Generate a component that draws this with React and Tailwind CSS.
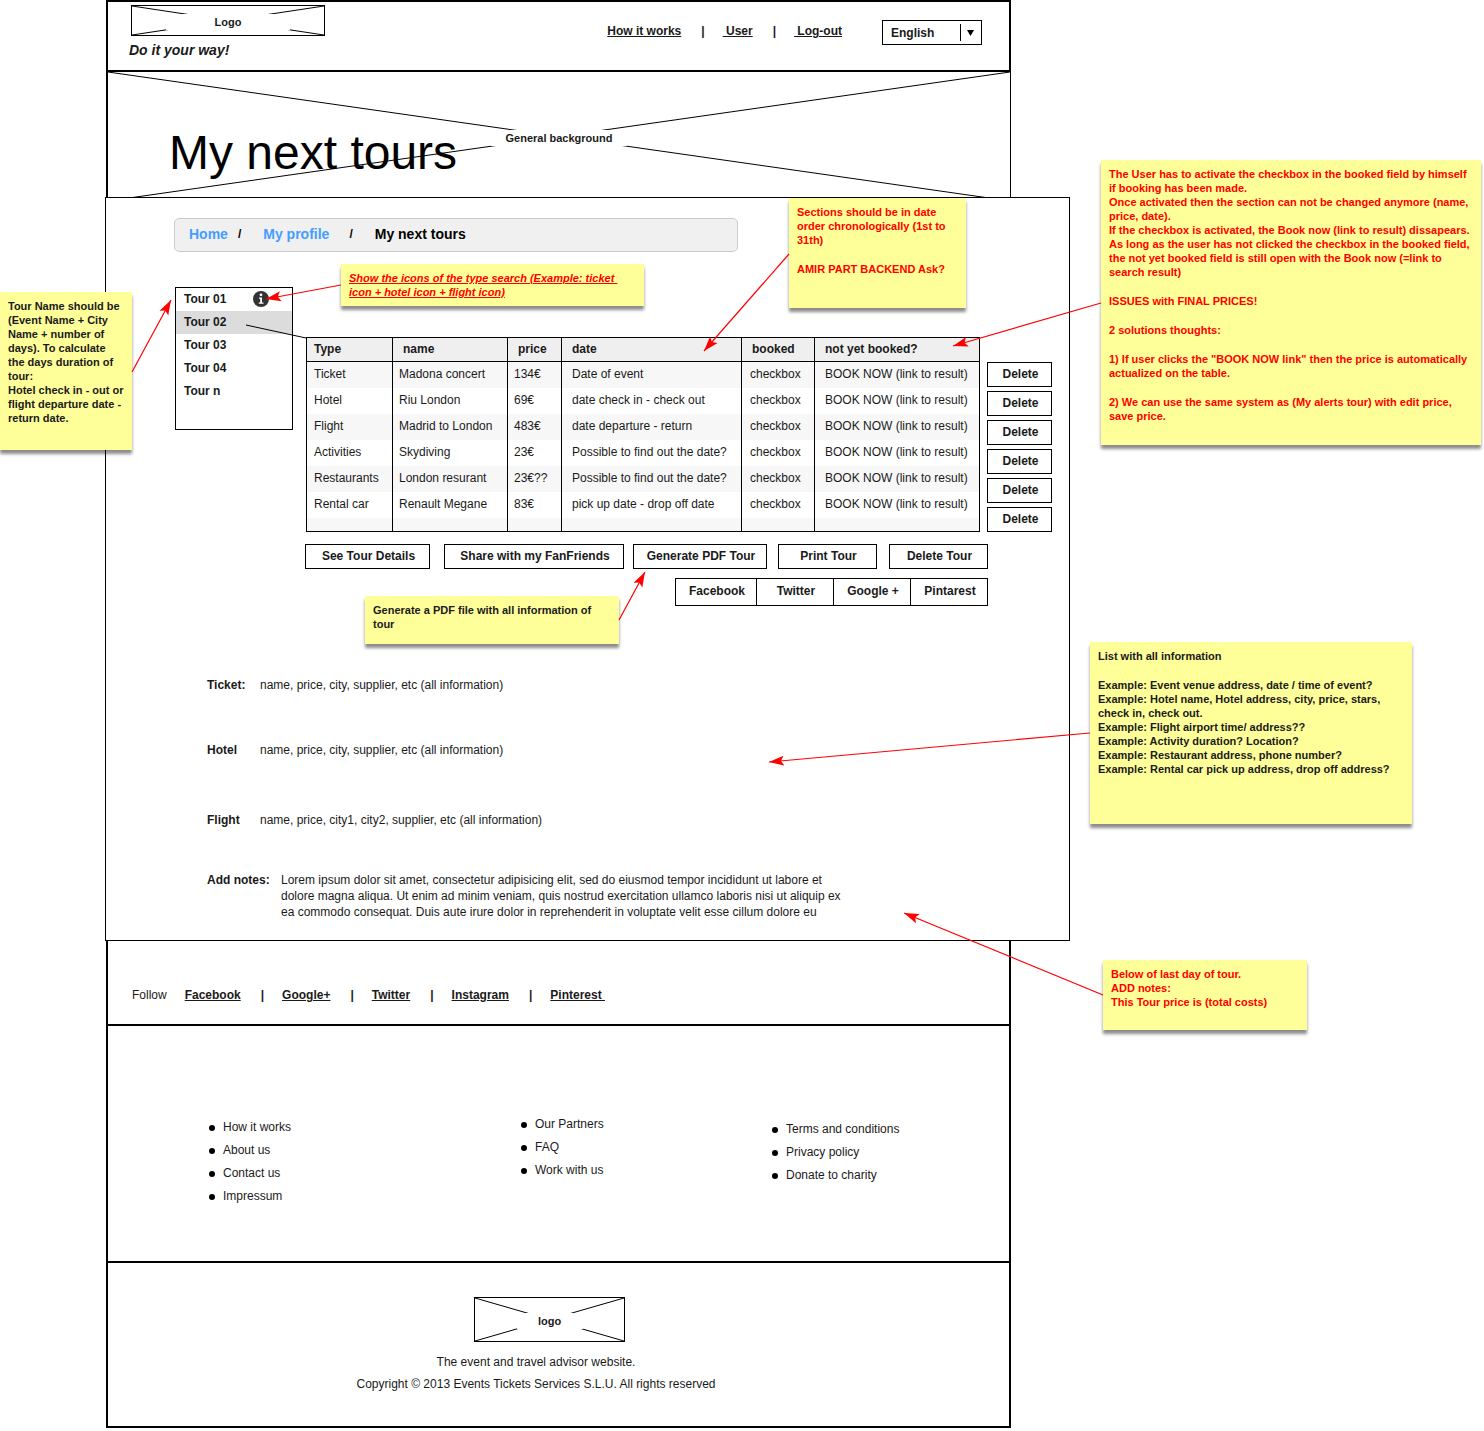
import React from "react";

const TOURS = ["Tour 01", "Tour 02", "Tour 03", "Tour 04", "Tour n"];

const COLUMNS = [
  { label: "Type", head: "w-[85px] pl-[7px]", cell: "pl-[7px]" },
  { label: "name", head: "w-[115px] border-l pl-[10px]", cell: "border-l pl-[6px]" },
  { label: "price", head: "w-[54px] border-l pl-[10px]", cell: "border-l pl-[6px]" },
  { label: "date", head: "w-[180px] border-l pl-[10px]", cell: "border-l pl-[10px]" },
  { label: "booked", head: "w-[73px] border-l pl-[10px]", cell: "border-l pl-[8px]" },
  { label: "not yet booked?", head: "w-[165px] border-l pl-[10px]", cell: "border-l pl-[10px]" },
];

const BOOK = "BOOK NOW (link to result)";

const ROWS = [
  ["Ticket", "Madona concert", "134€", "Date of event", "checkbox", BOOK],
  ["Hotel", "Riu London", "69€", "date check in - check out", "checkbox", BOOK],
  ["Flight", "Madrid to London", "483€", "date departure - return", "checkbox", BOOK],
  ["Activities", "Skydiving", "23€", "Possible to find out the date?", "checkbox", BOOK],
  ["Restaurants", "London resurant", "23€??", "Possible to find out the date?", "checkbox", BOOK],
  ["Rental car", "Renault Megane", "83€", "pick up date - drop off date", "checkbox", BOOK],
];

const ACTIONS = [
  { label: "See Tour Details", style: "w-[125px] mr-[14px]" },
  { label: "Share with my FanFriends", style: "w-[180px] mr-[9px]" },
  { label: "Generate PDF Tour", style: "w-[134px] mr-[11px]" },
  { label: "Print Tour", style: "w-[99px] mr-[12px]" },
  { label: "Delete Tour", style: "w-[99px]" },
];

const SHARE = [
  { label: "Facebook", style: "w-[80px]" },
  { label: "Twitter", style: "w-[77px] border-l" },
  { label: "Google +", style: "w-[77px] border-l" },
  { label: "Pintarest", style: "w-[77px] border-l" },
];

const FOLLOW = ["Facebook", "Google+", "Twitter", "Instagram", "Pinterest\u00a0"];

const FOOTER_LISTS = [
  { style: "w-[312px] pt-[3px]", items: ["How it works", "About us", "Contact us", "Impressum"] },
  { style: "w-[251px]", items: ["Our Partners", "FAQ", "Work with us"] },
  { style: "pt-[5px]", items: ["Terms and conditions", "Privacy policy", "Donate to charity"] },
];

const ARROWS = [
  [132, 372, 171, 300],
  [341, 285, 266, 299],
  [789, 254, 704, 351],
  [1101, 303, 953, 346],
  [619, 620, 645, 572],
  [1090, 733, 769, 762],
  [1103, 995, 904, 913],
];

function Placeholder({ label, className, labelClass }) {
  return (
    <div className={"relative flex items-center justify-center pt-[3px] " + className}>
      <svg className="absolute inset-0 h-full w-full" stroke="#000" strokeWidth="1" aria-hidden="true">
        <line x1="0" y1="0" x2="100%" y2="100%" />
        <line x1="0" y1="100%" x2="100%" y2="0" />
      </svg>
      <span className={"relative bg-white text-center text-[11px] leading-4 font-bold " + labelClass}>{label}</span>
    </div>
  );
}

function Note({ className, blocks }) {
  return (
    <aside
      className={
        "absolute flex flex-col gap-[15px] bg-[#ffff99] px-2 pt-[7px] text-[11px] leading-[14px] font-bold whitespace-nowrap shadow-[0_4px_3px_rgba(0,0,0,0.45)] " +
        className
      }
    >
      {blocks.map((lines, i) => (
        <p key={i}>
          {lines.map((line, j) => (
            <span key={j} className="block">
              {line}
            </span>
          ))}
        </p>
      ))}
    </aside>
  );
}

function Header() {
  return (
    <header className="mr-[473px] ml-[106px] flex items-start border-2 border-black pt-[3px] pr-[27px] pb-[10px] pl-[21px]">
      <div>
        <Placeholder label="Logo" className="ml-[2px] h-[31px] w-[194px] border border-black" labelClass="w-[124px]" />
        <p className="mt-[4px] text-sm leading-5 font-bold italic">Do it your way!</p>
      </div>
      <nav className="mt-[18px] ml-auto flex items-center leading-4 font-bold" aria-label="Account">
        <a href="#how" className="underline">How it works</a>
        <span className="mr-[18px] ml-[20px]">|</span>
        <a href="#user" className="underline">&nbsp;User</a>
        <span className="mr-[18px] ml-[20px]">|</span>
        <a href="#logout" className="underline">&nbsp;Log-out</a>
      </nav>
      <div className="relative mt-[15px] ml-10">
        <select
          aria-label="Language"
          defaultValue="English"
          className="block h-[25px] w-[100px] appearance-none border border-black bg-white pl-2 font-bold"
        >
          <option>English</option>
        </select>
        <svg className="pointer-events-none absolute top-0 right-0 h-[25px] w-[24px]" viewBox="0 0 24 25" aria-hidden="true">
          <path d="M2.5 4v17" stroke="#000" />
          <path d="M9 10h7l-3.500 6z" fill="#000" />
        </svg>
      </div>
    </header>
  );
}

function Hero() {
  return (
    <div className="relative mr-[473px] ml-[106px]">
      <Placeholder
        label="General background"
        className="h-[129px] border-r border-l-2 border-black"
        labelClass="w-[136px]"
      />
      <h1 className="absolute top-[53px] left-[63px] text-5xl leading-[56px] text-black">My next tours</h1>
    </div>
  );
}

function InfoIcon() {
  return (
    <svg className="h-4 w-4" viewBox="0 0 16 16" role="img" aria-label="Info">
      <circle cx="8" cy="8" r="8" fill="#333" />
      <circle cx="8" cy="3.800" r="1.400" fill="#fff" />
      <path d="M6 6.500h3v5h1.500v1.300h-4.800v-1.300h1.500v-3.700H6z" fill="#fff" />
    </svg>
  );
}

function TourTable() {
  return (
    <table className="ml-px w-[674px] table-fixed border-separate border-spacing-0 border border-black whitespace-nowrap">
      <thead>
        <tr className="h-[24px] bg-[#efefef] text-left">
          {COLUMNS.map((c) => (
            <th key={c.label} scope="col" className={"border-b border-black p-0 pb-[2px] " + c.head}>
              {c.label}
            </th>
          ))}
        </tr>
      </thead>
      <tbody>
        {ROWS.map((row) => (
          <tr key={row[0]} className="h-[26px] odd:bg-[#f7f7f7]">
            {row.map((text, i) => (
              <td key={i} className={"border-black p-0 pb-[2px] " + COLUMNS[i].cell}>
                {text}
              </td>
            ))}
          </tr>
        ))}
        <tr className="h-[13px] bg-[#f7f7f7]">
          {COLUMNS.map((c) => (
            <td key={c.label} className={"border-black p-0 " + c.cell} />
          ))}
        </tr>
      </tbody>
    </table>
  );
}

function Detail({ label, children, className }) {
  return (
    <div className={"flex " + className}>
      <dt className="w-[53px] shrink-0 font-bold">{label}</dt>
      <dd>{children}</dd>
    </div>
  );
}

function TourPanel() {
  return (
    <main className="relative -mt-[4px] mr-[414px] ml-[105px] border border-black bg-white pt-[20px] pb-[20px]">
      <nav
        aria-label="Breadcrumb"
        className="ml-[68px] flex h-[34px] w-[564px] items-center rounded-[5px] border border-[#ccc] bg-[#f0f0f0] pb-[2px] pl-[14px] text-sm font-bold text-black"
      >
        <a href="#home" className="text-[#449dff]">Home</a>
        <span className="mr-[22px] ml-[10px] text-xs">/</span>
        <a href="#profile" className="text-[#449dff]">My profile</a>
        <span className="mr-[22px] ml-[20px] text-xs">/</span>
        <span aria-current="page">My next tours</span>
      </nav>

      <div className="flex items-start pl-[69px]">
        <ul className="mt-[35px] h-[143px] w-[118px] shrink-0 border border-black font-bold">
          {TOURS.map((t, i) => (
            <li key={t} className={i === 1 ? "bg-[#dcdcdc]" : ""}>
              <button type="button" className="flex h-[23px] w-full items-center pb-[2px] pl-2 font-bold">
                <span className="w-[69px] text-left">{t}</span>
                {i === 0 && <InfoIcon />}
              </button>
            </li>
          ))}
        </ul>

        <div className="mt-[85px] ml-[12px]">
          <div className="flex items-start gap-[7px]">
            <TourTable />
            <div className="flex flex-col gap-1 pt-[25px]">
              {ROWS.map((row) => (
                <button key={row[0]} type="button" className="h-[25px] w-[65px] border border-black pb-[2px] pl-[2px] font-bold">
                  Delete
                </button>
              ))}
            </div>
          </div>
          <div className="mt-3 flex">
            {ACTIONS.map((a) => (
              <button
                key={a.label}
                type="button"
                className={"h-[25px] shrink-0 border border-black pb-[2px] pl-[2px] font-bold whitespace-nowrap " + a.style}
              >
                {a.label}
              </button>
            ))}
          </div>
          <div className="mt-[9px] flex w-[683px] justify-end">
            <div className="flex h-[28px] border border-black">
              {SHARE.map((s) => (
                <button key={s.label} type="button" className={"border-black pb-[2px] pl-[2px] font-bold " + s.style}>
                  {s.label}
                </button>
              ))}
            </div>
          </div>
        </div>
      </div>

      <dl className="mt-[71px] pl-[101px] leading-4">
        <Detail label="Ticket:" className="mb-[49px]">name, price, city, supplier, etc (all information)</Detail>
        <Detail label="Hotel" className="mb-[54px]">name, price, city, supplier, etc (all information)</Detail>
        <Detail label="Flight" className="mb-[44px]">name, price, city1, city2, supplier, etc (all information)</Detail>
        <div className="flex whitespace-nowrap">
          <dt className="w-[74px] shrink-0 font-bold">Add notes:</dt>
          <dd>
            Lorem ipsum dolor sit amet, consectetur adipisicing elit, sed do eiusmod tempor incididunt ut labore et
            <br />
            dolore magna aliqua. Ut enim ad minim veniam, quis nostrud exercitation ullamco laboris nisi ut aliquip ex
            <br />
            ea commodo consequat. Duis aute irure dolor in reprehenderit in voluptate velit esse cillum dolore eu
          </dd>
        </div>
      </dl>
    </main>
  );
}

function Footer() {
  return (
    <footer className="mr-[473px] ml-[106px] border-x-2 border-b-2 border-black">
      <div className="flex border-b-2 border-black pt-[46px] pb-[21px] pl-[24px] leading-4">
        <span className="mr-[18px]">Follow</span>
        {FOLLOW.map((name, i) => (
          <React.Fragment key={name}>
            {i > 0 && <span className="mr-[18px] ml-[20px] font-bold">|</span>}
            <a href={"#" + i} className="font-bold underline">
              {name}
            </a>
          </React.Fragment>
        ))}
      </div>
      <div className="flex items-start border-b-2 border-black pt-[87px] pb-[53px] pl-[101px] leading-[23px]">
        {FOOTER_LISTS.map((list) => (
          <ul key={list.items[0]} className={list.style}>
            {list.items.map((item) => (
              <li key={item} className="flex items-center gap-2">
                <span className="h-1.5 w-1.5 rounded-full bg-black" />
                <a href="#footer">{item}</a>
              </li>
            ))}
          </ul>
        ))}
      </div>
      <div className="pt-[34px] pb-[31px]">
        <Placeholder
          label="logo"
          className="ml-[366px] h-[45px] w-[151px] border border-black"
          labelClass="w-[66px]"
        />
        <div className="mr-[45px] text-center leading-[22px]">
          <p className="mt-[9px]">The event and travel advisor website.</p>
          <p>Copyright © 2013 Events Tickets Services S.L.U. All rights reserved</p>
        </div>
      </div>
    </footer>
  );
}

function Annotations() {
  return (
    <>
      <Note
        className="top-[292px] left-0 h-[158px] w-[132px]"
        blocks={[
          [
            "Tour Name should be",
            "(Event Name + City",
            "Name + number of",
            "days). To calculate",
            "the days duration of",
            "tour:",
            "Hotel check in - out or",
            "flight departure date -",
            "return date.",
          ],
        ]}
      />
      <Note
        className="top-[264px] left-[341px] h-[42px] w-[303px] text-[#f00] italic underline"
        blocks={[["Show the icons of the type search (Example: ticket\u00a0", "icon + hotel icon + flight icon)"]]}
      />
      <Note
        className="top-[198px] left-[789px] h-[110px] w-[177px] text-[#f00]"
        blocks={[["Sections should be in date", "order chronologically (1st to", "31th)"], ["AMIR PART BACKEND Ask?"]]}
      />
      <Note
        className="top-[160px] left-[1101px] h-[285px] w-[380px] text-[#f00]"
        blocks={[
          [
            "The User has to activate the checkbox in the booked field by himself",
            "if booking has been made.",
            "Once activated then the section can not be changed anymore (name,",
            "price, date).",
            "If the checkbox is activated, the Book now (link to result) dissapears.",
            "As long as the user has not clicked the checkbox in the booked field,",
            "the not yet booked field is still open with the Book now (=link to",
            "search result)",
          ],
          ["ISSUES with FINAL PRICES!"],
          ["2 solutions thoughts:"],
          ['1) If user clicks the "BOOK NOW link" then the price is automatically', "actualized on the table."],
          ["2) We can use the same system as (My alerts tour) with edit price,", "save price."],
        ]}
      />
      <Note
        className="top-[596px] left-[365px] h-[48px] w-[254px]"
        blocks={[["Generate a PDF file with all information of", "tour"]]}
      />
      <Note
        className="top-[642px] left-[1090px] h-[182px] w-[322px]"
        blocks={[
          ["List with all information"],
          [
            "Example: Event venue address, date / time of event?",
            "Example: Hotel name, Hotel address, city, price, stars,",
            "check in, check out.",
            "Example: Flight airport time/ address??",
            "Example: Activity duration? Location?",
            "Example: Restaurant address, phone number?",
            "Example: Rental car pick up address, drop off address?",
          ],
        ]}
      />
      <Note
        className="top-[960px] left-[1103px] h-[70px] w-[204px] text-[#f00]"
        blocks={[["Below of last day of tour.", "ADD notes:", "This Tour price is (total costs)"]]}
      />
      <svg className="pointer-events-none absolute inset-0 h-full w-full" aria-hidden="true">
        <defs>
          <marker id="head" markerUnits="userSpaceOnUse" markerWidth="16" markerHeight="12" refX="15" refY="6" orient="auto">
            <path d="M15 6L0 11L3 6L0 1z" fill="#f00" />
          </marker>
        </defs>
        {ARROWS.map(([x1, y1, x2, y2]) => (
          <line key={x1 + "-" + y1} x1={x1} y1={y1} x2={x2} y2={y2} stroke="#f00" strokeWidth="1.200" markerEnd="url(#head)" />
        ))}
        <line x1="246" y1="325" x2="306" y2="338" stroke="#000" />
      </svg>
    </>
  );
}

export default function App() {
  return (
    <div className="relative overflow-hidden bg-white pb-[3px] font-['Liberation_Sans',Arial,sans-serif] text-xs text-[#1a1a1a]">
      <Header />
      <Hero />
      <TourPanel />
      <Footer />
      <Annotations />
    </div>
  );
}
